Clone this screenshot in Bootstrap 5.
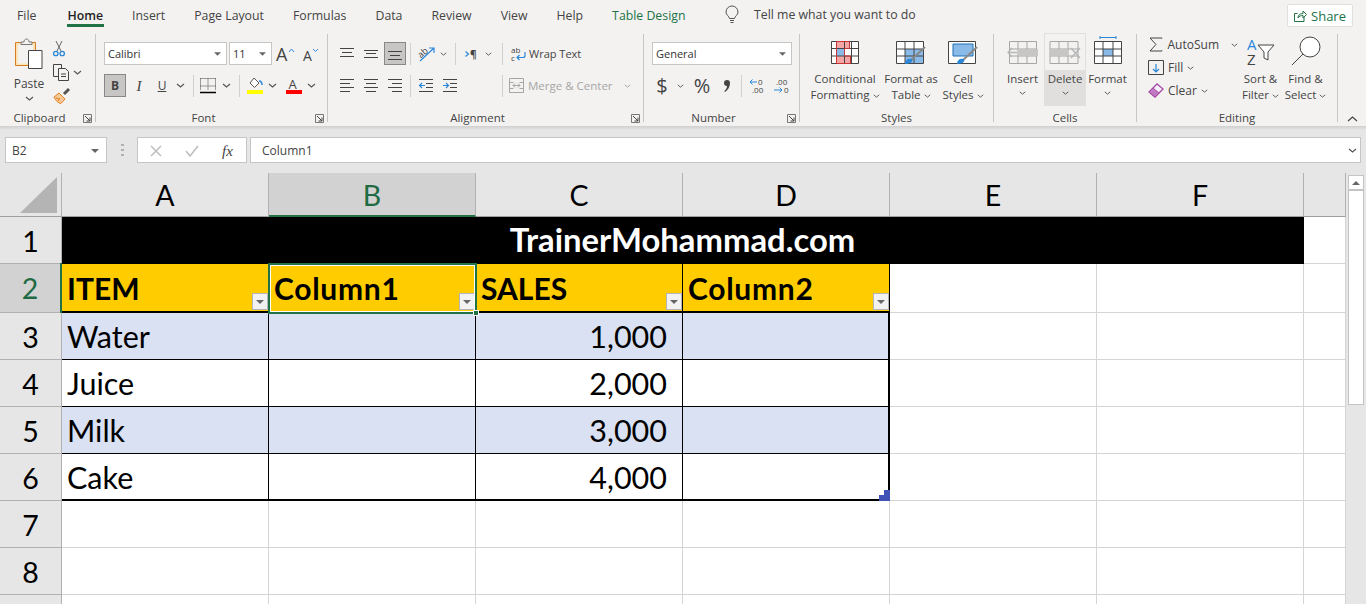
<!DOCTYPE html>
<html lang="en">
<head>
<meta charset="UTF-8">
<title>Book1 - Excel</title>
<link href="https://cdn.jsdelivr.net/npm/bootstrap@5.3.0/dist/css/bootstrap.min.css" rel="stylesheet">
<style>
html, body { height: 604px; overflow: hidden; }
body { background: #fff; color: #444; font-family: "Open Sans", "Liberation Sans", sans-serif; font-size: 12px; line-height: 16px; }
svg { display: block; flex: none; overflow: visible; }

/* tabs */
.tabbar { height: 29px; background: #f3f2f1; padding-left: 2.5px; font-size: 12.3px; }
.tab-item { padding: 0 14.5px; height: 29px; line-height: 31px; position: relative; color: #444; white-space: nowrap; }
.tab-item.is-on { color: #1e1e1e; font-weight: 600; margin-left: 2px; }
.tab-item.is-on::after { content: ""; position: absolute; left: 14px; right: 14px; bottom: 2px; height: 3px; background: #217346; }
.tab-green { color: #217346; }
.tell-me { margin-left: 25px; gap: 15px; }
.share-btn { margin: 4px 13px 0 auto; width: 66px; height: 23px; background: #fff; border: 1px solid #e1dfdd; border-radius: 2px; color: #217346; font-size: 13px; }

/* ribbon */
.ribbon { height: 97px; background: #f3f2f1; position: relative; }
.rb-grp { position: relative; flex: none; border-right: 1px solid #c8c6c4; margin-top: 5px; height: 88px; padding-top: 8px; }
.rb-foot { position: absolute; left: 0; right: 0; top: 76px; text-align: center; font-size: 11.5px; line-height: 16px; color: #444; }
.launcher { position: absolute; right: 3px; top: 4px; }
.collapse-mark { position: absolute; right: 8px; bottom: 4px; }
.shadow-strip { height: 4px; background: linear-gradient(#cfcfcf, #e6e6e6); }
.grp-clip { width: 96px; }
.grp-font { width: 232px; padding-left: 8px; }
.grp-align { width: 316px; padding-left: 8px; }
.grp-num { width: 156px; padding-left: 8px; }
.grp-styles { width: 194px; padding-left: 12px; padding-top: 7px; }
.grp-cells { width: 143px; padding-left: 7px; padding-top: 7px; }
.grp-edit { width: 201px; padding-left: 10px; }

.rb-sel { height: 23px; background: #fff; border: 1px solid #c8c6c4; display: flex; align-items: center; justify-content: space-between; padding: 0 5px 0 3px; font-size: 11px; color: #333; }
.sel-font { width: 123px; }
.sel-size { width: 43px; margin-left: 2px; }
.sel-num { width: 140px; }
.icon-row { display: grid; place-items: center; height: 23px; justify-content: start; }
.row-two { margin-top: 9px; }
.rb-press { background: #c8c6c4; border: 1px solid #8a8886; }
.v-rule { width: 1px; height: 22px; background: #d2d0ce; }
.big-btn { display: flex; flex-direction: column; align-items: center; text-align: center; line-height: 16px; font-size: 11.5px; white-space: nowrap; }
.big-btn svg.lead { margin-bottom: 7px; }
.icon-slot { height: 30px; margin-top: -6px; margin-bottom: 5px; display: flex; align-items: center; justify-content: center; }

.font-r2 { grid-template-columns: 22px 26px 20px 16px 10px 20px 16px 10px 22px 12px 32px 2px; }
.font-r1 { display: flex; align-items: center; }
.align-r1 { grid-template-columns: 22px 26px 22px 8px 36px 10px 22px 12px 16px auto; }
.align-r2 { grid-template-columns: 22px 26px 22px 8px 24px 24px 32px 16px auto; }
.num-r2 { grid-template-columns: 20px 16px 28px 20px 10px 22px 26px; }
.num-glyph { font-size: 20px; line-height: 1; }

.col-clip-big { width: 38px; margin-left: 10px; margin-top: -4px; font-size: 12px; }
.clip-small { margin-left: 5px; margin-top: -5px; }
.clip-item { height: 23.5px; display: flex; align-items: center; gap: 3px; }

.wrap-lbl { display: flex; align-items: center; gap: 3px; font-size: 11px; white-space: nowrap; padding-left: 1px; }
.merge-lbl { gap: 4px; padding-left: 0; margin-left: -1px; color: #a6a6a6; font-size: 11.5px; }
.merge-chev { margin-left: 7px; opacity: .5; }

.col-styl-a { width: 66px; }
.col-styl-b { width: 66px; }
.col-styl-c { width: 38px; }
.col-cell { width: 43px; }
.del-box { width: 42px; height: 73px; margin-top: -8px; padding-top: 7px; border: 1px solid #e1dfdd; background: linear-gradient(#f3f2f1 36px, #e1dfdd 36px); }
.fmt-icon { margin-top: -5px; }

.edit-col { width: 91px; margin-top: -9px; }
.edit-item { height: 23px; display: flex; align-items: center; gap: 4px; white-space: nowrap; }
.edit-icon { width: 17px; display: flex; justify-content: center; }
.edit-big { width: 45px; }

/* formula bar */
.fx-row { height: 43px; background: #e6e6e6; padding: 7px 5px 10px 5px; }
.fx-box { height: 26px; background: #fff; border: 1px solid #c6c6c6; display: flex; align-items: center; color: #444; font-size: 12px; padding-top: 1px; }
.fx-name { width: 102px; padding-left: 6px; padding-right: 7px; justify-content: space-between; }
.fx-dots { width: 30px; display: flex; justify-content: center; }
.fx-btns { width: 110px; gap: 23px; padding-left: 12px; }
.fx-input { flex: 1; margin-left: 3px; padding-left: 11px; padding-right: 3px; justify-content: space-between; }

/* sheet */
.sheet-wrap { position: relative; height: 431px; overflow: hidden; }
.sheet-tbl { border-collapse: separate; border-spacing: 0; table-layout: fixed; width: 1346px; font-family: Lato, "Liberation Sans", sans-serif; color: #000; }
.col-hdr { width: 62px; }
.col-std { width: 207px; }
.col-end { width: 42px; }
.sheet-tbl td, .sheet-tbl th { border-right: 1px solid #d4d4d4; border-bottom: 1px solid #d4d4d4; padding: 1px 5px 0; font-size: 30.5px; font-weight: 400; line-height: 1; white-space: nowrap; }
.sheet-tbl .hd-col { height: 44px; background: #e6e6e6; text-align: center; border-right-color: #b1b1b1; border-bottom-color: #9f9f9f; padding-top: 2px; font-size: 28.5px; }
.sheet-tbl .hd-row { background: #e6e6e6; text-align: center; border-right-color: #b1b1b1; border-bottom-color: #b1b1b1; padding: 2px 0 0; font-size: 28.5px; }
.sheet-tbl .hd-col.hd-on { background: #d2d2d2; color: #1f6b43; border-bottom: 2px solid #217346; }
.sheet-tbl .hd-row.hd-on { background: #d2d2d2; color: #1f6b43; border-right: 2px solid #217346; padding-top: 0; }
.sheet-tbl .hd-plain { height: 44px; background: #e6e6e6; padding: 0; border-right-color: #b1b1b1; border-bottom-color: #9f9f9f; }
.ht-47 { height: 47px; }
.ht-49 { height: 49px; }
.sheet-tbl td.banner { background: #000; color: #fff; font-weight: 700; font-size: 32.8px; text-align: center; border-color: #000; }
.sheet-tbl td.tb-head { background: #ffcc00; font-weight: 700; font-size: 30px; position: relative; border-right: 1px solid #000; border-bottom: 2px solid #000; padding-top: 0; }
.tb-spaced { letter-spacing: .7px; }
.sheet-tbl td.tb-cell { border-right: 1px solid #000; border-bottom: 1px solid #000; }
.sheet-tbl td.tb-band { background: #d9e1f2; }
.sheet-tbl td.tb-end { border-right: 2px solid #000; }
.sheet-tbl td.tb-last { border-bottom: 2px solid #000; position: relative; }
.sheet-tbl td.num-cell { text-align: right; padding-right: 15px; }
.filter-btn { position: absolute; right: 0; bottom: 1px; width: 16px; height: 17px; background: #f2f2f2; border: 1px solid #b5b5b5; display: flex; align-items: center; justify-content: center; }
.resize-mark { position: absolute; right: -2px; bottom: -2px; }
.cell-select { position: absolute; left: 268px; top: 90px; width: 209px; height: 51px; border: 2px solid #217346; outline: 1px solid #fff; outline-offset: -3px; pointer-events: none; }
.cell-handle { position: absolute; right: -4px; bottom: -4px; width: 6px; height: 6px; background: #217346; border: 1px solid #fff; }
.row-green { position: absolute; left: 60px; top: 90px; width: 2px; height: 50px; background: #217346; }
.scroll-v { position: absolute; left: 1346px; top: 0; width: 20px; height: 431px; background: #e6e6e6; }
.scroll-up { margin: 2px 2px 0 2px; height: 15px; background: #fff; border: 1px solid #c4c4c4; display: flex; align-items: center; justify-content: center; }
.scroll-thumb { margin: 0 2px; height: 215px; background: #fff; border: 1px solid #c4c4c4; }
.serif-i { font-family: "Liberation Serif", serif; font-style: italic; font-size: 15px; }
</style>
</head>
<body>
<svg width="0" height="0" class="position-absolute">
  <defs>
    <symbol id="chev" viewBox="0 0 9 5"><path d="M1 1l3.5 3L8 1" fill="none" stroke="#555" stroke-width="1.2"/></symbol>
    <symbol id="launch" viewBox="0 0 9 9"><path d="M.5 8.5V.5h8v8z" fill="none" stroke="#777"/><path d="M2 2l5 5M7 3.500V7H3.500" fill="none" stroke="#444"/></symbol>
    <symbol id="tri" viewBox="0 0 8 4"><path d="M0 0h8L4 4z" fill="#666"/></symbol>
  </defs>
</svg>

<div class="tabbar d-flex">
  <div class="d-flex" id="tabs">
    <span class="tab-item">File</span>
    <span class="tab-item is-on">Home</span>
    <span class="tab-item">Insert</span>
    <span class="tab-item">Page Layout</span>
    <span class="tab-item">Formulas</span>
    <span class="tab-item">Data</span>
    <span class="tab-item">Review</span>
    <span class="tab-item">View</span>
    <span class="tab-item">Help</span>
    <span class="tab-item tab-green">Table Design</span>
  </div>
  <div class="d-flex align-items-center tell-me">
    <svg width="14" height="18" viewBox="0 0 14 18" fill="none" stroke="#555"><path d="M4.500 12.500C4 10 1 9 1 6a6 6 0 0 1 12 0c0 3-3 4-3.500 6.500z"/><path d="M5 14.500h4M5.500 16.500h3"/></svg>
    <span>Tell me what you want to do</span>
  </div>
  <div class="share-btn d-flex align-items-center justify-content-center gap-1">
    <svg width="13" height="13" viewBox="0 0 13 13" fill="none" stroke="#217346"><path d="M10 7.500v5H.5v-8h3"/><path d="M4 9c0-3 2-4.500 5-4.500V2l3.500 3.500L9 9V6.500C7 6.500 5 7 4 9z"/></svg>
    <span>Share</span>
  </div>
</div>

<div class="ribbon d-flex">
  <!-- Clipboard -->
  <section class="rb-grp grp-clip d-flex">
    <div class="big-btn col-clip-big">
      <svg class="lead" width="28" height="31" viewBox="0 0 28 31"><path d="M.5 4.500h20v23H.5z" fill="#fbe3b5" stroke="#d67b1e"/><path d="M3 6.500h15v19H3z" fill="#f3f2f1"/><path d="M6 6.500V4h3c0-4 5-4 5 0h3v2.500z" fill="#f3f2f1" stroke="#777"/><path d="M13.500 12.500h13.500v18H13.500z" fill="#fff" stroke="#444"/></svg>
      <span>Paste</span>
      <svg class="mt-1" width="9" height="5"><use href="#chev"/></svg>
    </div>
    <div class="clip-small">
      <div class="clip-item"><svg width="12" height="17" viewBox="0 0 12 17" fill="none"><path d="M3 1l5 10M9 1L4 11" stroke="#666"/><circle cx="2.800" cy="13.500" r="2.200" stroke="#2b88d8" stroke-width="1.300"/><circle cx="9.200" cy="13.500" r="2.200" stroke="#2b88d8" stroke-width="1.300"/></svg></div>
      <div class="clip-item"><svg width="17" height="17" viewBox="0 0 17 17" fill="#f3f2f1" stroke="#444"><path d="M.5.500h8v12h-8z"/><path d="M5.500 4.500h7l3 3v9h-10z"/><path d="M8 10h5M8 12.500h5" /></svg><svg width="9" height="5"><use href="#chev"/></svg></div>
      <div class="clip-item"><svg width="17" height="16" viewBox="0 0 17 16"><path d="M16 1l-5 5" stroke="#555" stroke-width="3"/><path d="M1 9l5-4 6 6-4 4.500C5 15 3 13 1 9z" fill="#f7c99a" stroke="#e3811c"/><path d="M3 10l3 1M5 13l2-3" stroke="#e3811c"/></svg></div>
    </div>
    <div class="rb-foot pe-3">Clipboard<svg class="launcher" width="9" height="9"><use href="#launch"/></svg></div>
  </section>

  <!-- Font -->
  <section class="rb-grp grp-font">
    <div class="font-r1">
      <div class="rb-sel sel-font"><span>Calibri</span><svg width="7" height="4"><use href="#tri"/></svg></div>
      <div class="rb-sel sel-size"><span>11</span><svg width="7" height="4"><use href="#tri"/></svg></div>
      <svg class="ms-1" width="19" height="16" viewBox="0 0 19 16"><text x="0" y="15" font-size="18" fill="#444">A</text><path d="M13 6l2.500-3L18 6" fill="none" stroke="#2b88d8"/></svg>
      <svg class="ms-2" width="16" height="14" viewBox="0 0 16 14"><text x="0" y="14" font-size="14" fill="#444">A</text><path d="M10 2l2.500 2.500L15 2" fill="none" stroke="#2b88d8"/></svg>
    </div>
    <div class="icon-row row-two font-r2">
      <div class="rb-press d-flex align-items-center justify-content-center w-100 h-100 fw-bold">B</div>
      <span class="serif-i">I</span>
      <span class="text-decoration-underline">U</span>
      <svg width="9" height="5"><use href="#chev"/></svg>
      <span class="v-rule"></span>
      <svg width="16" height="16" viewBox="0 0 16 16" fill="none"><path d="M.5.500h15M.5 8h15M.5.500v12M15.500.500v12M8 .500v12" stroke="#444" stroke-dasharray="1 1"/><path d="M0 14.500h16" stroke="#000" stroke-width="1.500"/></svg>
      <svg width="9" height="5"><use href="#chev"/></svg>
      <span class="v-rule"></span>
      <svg width="16" height="17" viewBox="0 0 16 17"><path d="M7 1l5 5-4.500 4.500L3 6z" fill="#fff" stroke="#555"/><path d="M12 4c2 0 3 1 3 4" fill="none" stroke="#2b88d8" stroke-width="1.500"/><path d="M0 13h16v4H0z" fill="#ffff00"/></svg>
      <svg width="9" height="5"><use href="#chev"/></svg>
      <svg width="16" height="17" viewBox="0 0 16 17"><text x="2.500" y="12" font-size="13" fill="#444">A</text><path d="M0 13h16v4H0z" fill="#ff0000"/></svg>
      <svg width="9" height="5"><use href="#chev"/></svg>
    </div>
    <div class="rb-foot pe-3">Font<svg class="launcher" width="9" height="9"><use href="#launch"/></svg></div>
  </section>

  <!-- Alignment -->
  <section class="rb-grp grp-align">
    <div class="icon-row align-r1">
      <svg width="14" height="11" viewBox="0 0 14 11" stroke="#444"><path d="M0 .500h14M2 4.500h10M0 8.500h14"/></svg>
      <svg width="14" height="11" viewBox="0 0 14 11" stroke="#444"><path d="M0 2.500h14M2 5.500h10M0 9.500h14"/></svg>
      <div class="rb-press d-flex align-items-end justify-content-center w-100 h-100 pb-1"><svg width="14" height="11" viewBox="0 0 14 11" stroke="#444"><path d="M0 2.500h14M2 6.500h10M0 10.500h14"/></svg></div>
      <span class="v-rule"></span>
      <div class="d-flex align-items-center gap-1"><svg width="18" height="17" viewBox="0 0 18 17"><text x="0" y="10" font-size="9" fill="#444" transform="rotate(-40 6 8)">ab</text><path d="M2 16L16 3M11 3h5v5" fill="none" stroke="#2b88d8" stroke-width="1.200"/></svg><svg width="7" height="4"><use href="#chev"/></svg></div>
      <span class="v-rule"></span>
      <svg width="13" height="10" viewBox="0 0 13 10"><path d="M.5 2.500L3.500 5 .5 7.500" fill="none" stroke="#2b88d8" stroke-width="1.200"/><text x="5" y="9" font-size="10" font-weight="700" fill="#444">¶</text></svg>
      <svg width="7" height="4"><use href="#chev"/></svg>
      <span class="v-rule"></span>
      <div class="wrap-lbl"><svg width="15" height="16" viewBox="0 0 15 16"><text x="0" y="7" font-size="8" fill="#444">ab</text><text x="0" y="15" font-size="8" fill="#444">c</text><path d="M14 6v3.500q0 2-2 2H6M8.500 9L6 11.500 8.500 14" fill="none" stroke="#2b88d8" stroke-width="1.200"/></svg><span>Wrap Text</span></div>
    </div>
    <div class="icon-row row-two align-r2">
      <svg width="14" height="13" viewBox="0 0 14 13" stroke="#444"><path d="M0 .500h14M0 4.500h10M0 8.500h14M0 12.500h10"/></svg>
      <svg width="14" height="13" viewBox="0 0 14 13" stroke="#444"><path d="M0 .500h14M2 4.500h10M0 8.500h14M2 12.500h10"/></svg>
      <svg width="14" height="13" viewBox="0 0 14 13" stroke="#444"><path d="M0 .500h14M4 4.500h10M0 8.500h14M4 12.500h10"/></svg>
      <span class="v-rule"></span>
      <svg width="14" height="13" viewBox="0 0 14 13" fill="none"><path d="M0 .500h14M7 4.500h7M7 8.500h7M0 12.500h14" stroke="#444"/><path d="M6 6.500H.5M3 4L.5 6.500 3 9" stroke="#2b88d8" stroke-width="1.200"/></svg>
      <svg width="14" height="13" viewBox="0 0 14 13" fill="none"><path d="M0 .500h14M7 4.500h7M7 8.500h7M0 12.500h14" stroke="#444"/><path d="M0 6.500h5.500M3 4l2.500 2.500L3 9" stroke="#2b88d8" stroke-width="1.200"/></svg>
      <span></span>
      <span class="v-rule"></span>
      <div class="wrap-lbl merge-lbl"><svg width="15" height="15" viewBox="0 0 15 15" fill="none" stroke="#a6a6a6"><path d="M.5.500h14v14H.5zM.5 4.500h4M10.500 4.500h4M.5 10.500h4M10.500 10.500h4M4 7.500h7M6 5.500l-2 2 2 2M9 5.500l2 2-2 2"/></svg><span>Merge &amp; Center</span><svg class="merge-chev" width="7" height="4"><use href="#chev"/></svg></div>
    </div>
    <div class="rb-foot pe-3">Alignment<svg class="launcher" width="9" height="9"><use href="#launch"/></svg></div>
  </section>

  <!-- Number -->
  <section class="rb-grp grp-num">
    <div class="rb-sel sel-num"><span>General</span><svg width="7" height="4"><use href="#tri"/></svg></div>
    <div class="icon-row row-two num-r2">
      <span class="num-glyph">$</span>
      <svg width="7" height="4"><use href="#chev"/></svg>
      <span class="num-glyph">%</span>
      <svg width="7" height="12" viewBox="0 0 7 12" fill="#444"><path d="M1 3a3 3 0 1 1 6 0c0 4-2 7-5 9l-.8-.8C3 9.500 4 8 4 6 2 6 1 5 1 3z"/></svg>
      <span class="v-rule"></span>
      <svg width="17" height="16" viewBox="0 0 17 16"><text x="9" y="7" font-size="8" fill="#444">0</text><text x="3" y="15" font-size="8" fill="#444">.00</text><path d="M8 4H1M3.500 1.500L1 4l2.500 2.500" fill="none" stroke="#2b88d8"/></svg>
      <svg width="17" height="16" viewBox="0 0 17 16"><text x="3" y="7" font-size="8" fill="#444">.00</text><text x="11" y="15" font-size="8" fill="#444">0</text><path d="M1 12h8M6.500 9.500L9 12l-2.500 2.500" fill="none" stroke="#2b88d8"/></svg>
    </div>
    <div class="rb-foot pe-3">Number<svg class="launcher" width="9" height="9"><use href="#launch"/></svg></div>
  </section>

  <!-- Styles -->
  <section class="rb-grp grp-styles d-flex">
    <div class="big-btn col-styl-a">
      <svg class="lead" width="28" height="23" viewBox="0 0 28 23"><path d="M.5.500h27v22H.5z" fill="#fff"/><path d="M5.500.5h13v7h-13zM5.500 15h14v7.500h-14z" fill="#f4a6a6"/><path d="M5.500 7.500h8v7.500h-8z" fill="#8abbe8"/><path d="M.5.500h27v22H.5zM.5 7.500h27M.5 15h27M5.500.5v22M13.500.5v22M20.500.5v22" fill="none" stroke="#444"/><path d="M5.500.5h13v7h-5v7.500h6v7.500h-14z" fill="none" stroke="#c33"/></svg>
      <span>Conditional<br>Formatting <svg class="d-inline" width="7" height="4"><use href="#chev"/></svg></span>
    </div>
    <div class="big-btn col-styl-b">
      <svg class="lead" width="30" height="23" viewBox="0 0 30 23"><path d="M.5.500h27v22H.5z" fill="#fff"/><path d="M9 8h18v14H9z" fill="#8abbe8"/><path d="M.5.500h27v22H.5zM.5 8h27M.5 15h27M9 .5v22M18 .5v22" fill="none" stroke="#444"/><path d="M29 6L14 20" stroke="#888" stroke-width="2"/><path d="M9 23c0-4 3-6 6-5s1 5-6 5z" fill="#2b88d8"/></svg>
      <span>Format as<br>Table <svg class="d-inline" width="7" height="4"><use href="#chev"/></svg></span>
    </div>
    <div class="big-btn col-styl-c">
      <svg class="lead" width="30" height="23" viewBox="0 0 30 23"><path d="M.5.500h27v22H.5z" fill="#fff"/><path d="M5 3h20v12H5z" fill="#8abbe8" stroke="#1a6fb5"/><path d="M.5.500h27v22H.5z" fill="none" stroke="#444"/><path d="M29 6L14 20" stroke="#888" stroke-width="2"/><path d="M9 23c0-4 3-6 6-5s1 5-6 5z" fill="#2b88d8"/></svg>
      <span>Cell<br>Styles <svg class="d-inline" width="7" height="4"><use href="#chev"/></svg></span>
    </div>
    <div class="rb-foot">Styles</div>
  </section>

  <!-- Cells -->
  <section class="rb-grp grp-cells d-flex">
    <div class="big-btn col-cell">
      <svg class="lead" width="32" height="23" viewBox="0 0 32 23"><path d="M2.500.500h27v22h-27zM2.500 8h27M2.500 15h27M11 .5v22M20 .5v22" fill="none" stroke="#a6a6a6"/><path d="M11 8h20v7H11z" fill="#c8c6c4"/><path d="M10 11.500H1M5 7l-4 4.500L5 16" fill="none" stroke="#b5b5b5" stroke-width="1.300"/></svg>
      <span>Insert</span>
      <svg class="mt-1" width="7" height="4"><use href="#chev"/></svg>
    </div>
    <div class="big-btn del-box">
      <svg class="lead" width="32" height="23" viewBox="0 0 32 23"><path d="M1 .500h28v22H1zM1 8h28M1 15h28M10 .5v22M19 .5v22" fill="none" stroke="#a6a6a6"/><path d="M1 8h18v7H1z" fill="#c8c6c4"/><path d="M22 7l9 10M31 7l-9 10" stroke="#b5b5b5" stroke-width="1.300"/></svg>
      <span>Delete</span>
      <svg class="mt-1" width="7" height="4"><use href="#chev"/></svg>
    </div>
    <div class="big-btn col-cell">
      <svg class="lead fmt-icon" width="28" height="28" viewBox="0 0 28 28"><path d="M6 1.500h16M6 0v3M22 0v3" stroke="#2b88d8" fill="none"/><path d="M.5 5.500h27v22H.5z" fill="#fff" stroke="#444"/><path d="M9 13h10v7H9z" fill="#8abbe8"/><path d="M.5 13h27M.5 20h27M9 5.500v22M19 5.500v22" fill="none" stroke="#444"/></svg>
      <span>Format</span>
      <svg class="mt-1" width="7" height="4"><use href="#chev"/></svg>
    </div>
    <div class="rb-foot">Cells</div>
  </section>

  <!-- Editing -->
  <section class="rb-grp grp-edit d-flex">
    <div class="edit-col">
      <div class="edit-item"><span class="edit-icon"><svg width="13" height="15" viewBox="0 0 13 15" fill="none" stroke="#444"><path d="M13 1.500V1H1l6 6.500L1 14h12v-.5"/></svg></span><span>AutoSum</span><svg class="ms-2" width="7" height="4"><use href="#chev"/></svg></div>
      <div class="edit-item"><span class="edit-icon"><svg width="16" height="15" viewBox="0 0 16 15" fill="none"><path d="M.5.500h15v14H.5z" stroke="#444"/><path d="M8 4v8M5 9l3 3 3-3" stroke="#2b88d8" stroke-width="1.200"/></svg></span><span>Fill</span><svg width="7" height="4"><use href="#chev"/></svg></div>
      <div class="edit-item"><span class="edit-icon"><svg width="16" height="15" viewBox="0 0 16 15"><path d="M1 9l8-8 6 5-8 8z" fill="#f7f0f9" stroke="#a64ca6" stroke-width="1.300"/><path d="M1 9l4-4 6 5-4 4z" fill="#c27bc2" stroke="#a64ca6"/></svg></span><span>Clear</span><svg width="7" height="4"><use href="#chev"/></svg></div>
    </div>
    <div class="big-btn edit-big">
      <div class="icon-slot"><svg width="28" height="29" viewBox="0 0 28 29"><text x="0" y="13" font-size="15" fill="#2b88d8">A</text><text x="0" y="28" font-size="15" fill="#444">Z</text><path d="M11 8h16l-6 7v8l-4-2v-6z" fill="#fff" stroke="#444"/></svg></div>
      <span>Sort &amp;<br>Filter <svg class="d-inline" width="7" height="4"><use href="#chev"/></svg></span>
    </div>
    <div class="big-btn edit-big">
      <div class="icon-slot"><svg width="30" height="29" viewBox="0 0 30 29" fill="none" stroke="#444"><circle cx="19" cy="10" r="10" fill="#fff"/><path d="M12 17L1 28"/></svg></div>
      <span>Find &amp;<br>Select <svg class="d-inline" width="7" height="4"><use href="#chev"/></svg></span>
    </div>
    <div class="rb-foot">Editing</div>
  </section>
  <svg class="collapse-mark" width="11" height="6" viewBox="0 0 11 6"><path d="M1 5l4.500-4L10 5" fill="none" stroke="#444" stroke-width="1.200"/></svg>
</div>
<div class="shadow-strip"></div>

<div class="fx-row d-flex">
  <div class="fx-box fx-name"><span>B2</span><svg width="8" height="4"><use href="#tri"/></svg></div>
  <div class="fx-dots align-items-center"><svg width="3" height="12" viewBox="0 0 3 12" fill="#b0b0b0"><path d="M0 0h3v2H0zM0 5h3v2H0zM0 10h3v2H0z"/></svg></div>
  <div class="fx-box fx-btns">
    <svg width="12" height="12" viewBox="0 0 12 12"><path d="M1 1l10 10M11 1L1 11" stroke="#bdbdbd" stroke-width="1.500"/></svg>
    <svg width="14" height="12" viewBox="0 0 14 12" fill="none"><path d="M1 6l4 5 8-10" stroke="#bdbdbd" stroke-width="1.500"/></svg>
    <span class="serif-i">fx</span>
  </div>
  <div class="fx-box fx-input"><span>Column1</span><svg width="9" height="5"><use href="#chev"/></svg></div>
</div>

<div class="sheet-wrap">
  <table class="sheet-tbl">
    <colgroup><col class="col-hdr"><col class="col-std"><col class="col-std"><col class="col-std"><col class="col-std"><col class="col-std"><col class="col-std"><col class="col-end"></colgroup>
    <tr>
      <th class="hd-plain"><svg class="ms-auto me-1" width="37" height="36" viewBox="0 0 37 36"><path d="M37 0v36H0z" fill="#b4b4b4"/></svg></th>
      <th class="hd-col">A</th><th class="hd-col hd-on">B</th><th class="hd-col">C</th><th class="hd-col">D</th><th class="hd-col">E</th><th class="hd-col">F</th><th class="hd-col"></th>
    </tr>
    <tr class="ht-47"><th class="hd-row">1</th><td class="banner" colspan="6">TrainerMohammad.com</td><td></td></tr>
    <tr class="ht-49">
      <th class="hd-row hd-on">2</th>
      <td class="tb-head">ITEM<span class="filter-btn"><svg width="8" height="4"><use href="#tri"/></svg></span></td>
      <td class="tb-head tb-spaced">Column1<span class="filter-btn"><svg width="8" height="4"><use href="#tri"/></svg></span></td>
      <td class="tb-head">SALES<span class="filter-btn"><svg width="8" height="4"><use href="#tri"/></svg></span></td>
      <td class="tb-head tb-spaced">Column2<span class="filter-btn"><svg width="8" height="4"><use href="#tri"/></svg></span></td>
      <td></td><td></td><td></td>
    </tr>
    <tr class="ht-47"><th class="hd-row">3</th><td class="tb-cell tb-band">Water</td><td class="tb-cell tb-band"></td><td class="tb-cell tb-band num-cell">1,000</td><td class="tb-cell tb-band tb-end"></td><td></td><td></td><td></td></tr>
    <tr class="ht-47"><th class="hd-row">4</th><td class="tb-cell">Juice</td><td class="tb-cell"></td><td class="tb-cell num-cell">2,000</td><td class="tb-cell tb-end"></td><td></td><td></td><td></td></tr>
    <tr class="ht-47"><th class="hd-row">5</th><td class="tb-cell tb-band">Milk</td><td class="tb-cell tb-band"></td><td class="tb-cell tb-band num-cell">3,000</td><td class="tb-cell tb-band tb-end"></td><td></td><td></td><td></td></tr>
    <tr class="ht-47"><th class="hd-row">6</th><td class="tb-cell tb-last">Cake</td><td class="tb-cell tb-last"></td><td class="tb-cell tb-last num-cell">4,000</td><td class="tb-cell tb-end tb-last"><svg class="resize-mark" width="11" height="11" viewBox="0 0 11 11"><path d="M5 0h6v11H0V5h5z" fill="#3f51b5"/></svg></td><td></td><td></td><td></td></tr>
    <tr class="ht-47"><th class="hd-row">7</th><td></td><td></td><td></td><td></td><td></td><td></td><td></td></tr>
    <tr class="ht-47"><th class="hd-row">8</th><td></td><td></td><td></td><td></td><td></td><td></td><td></td></tr>
    <tr class="ht-47"><th class="hd-row"></th><td></td><td></td><td></td><td></td><td></td><td></td><td></td></tr>
  </table>
  <div class="row-green"></div>
  <div class="cell-select"><span class="cell-handle"></span></div>
  <div class="scroll-v">
    <div class="scroll-up"><svg width="8" height="4" viewBox="0 0 8 4"><path d="M0 4h8L4 0z" fill="#666"/></svg></div>
    <div class="scroll-thumb"></div>
  </div>
</div>

<script src="https://cdn.jsdelivr.net/npm/bootstrap@5.3.0/dist/js/bootstrap.bundle.min.js"></script>
</body>
</html>
